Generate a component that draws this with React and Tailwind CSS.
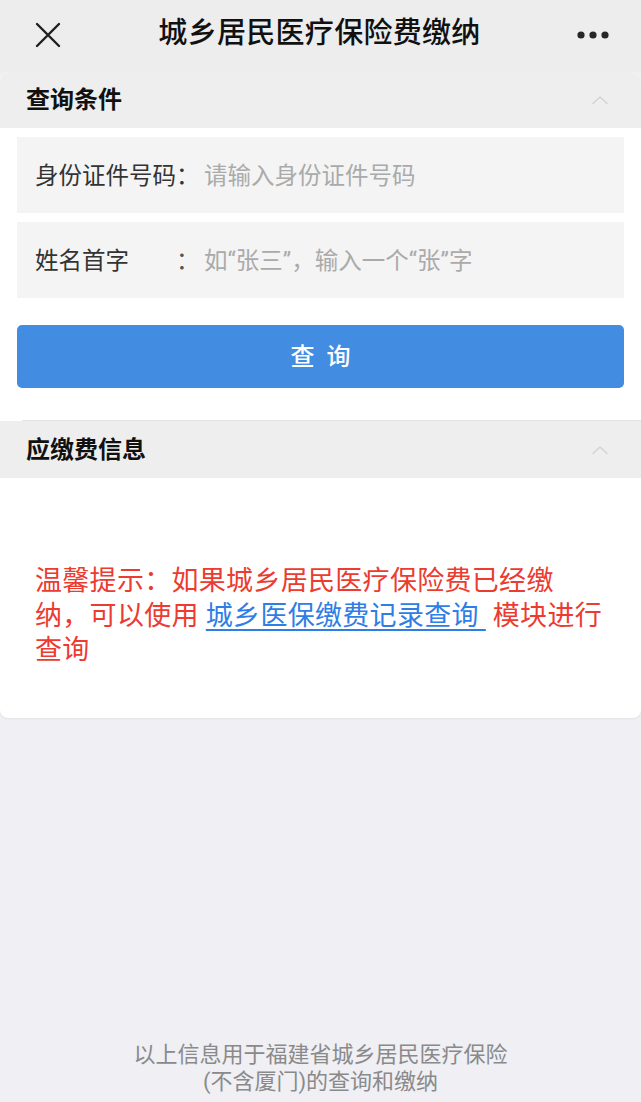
import React from "react";

function Chevron() {
  return (
    <svg width="18" height="10" viewBox="0 0 18 10" fill="none">
      <path d="M2 8.5 L9 2 L16 8.5" stroke="#d4d4d4" strokeWidth="1.6" strokeLinecap="round" strokeLinejoin="round" />
    </svg>
  );
}

export default function App() {
  return (
    <div className="w-[641px] h-[1102px] bg-[#efeff4] flex flex-col font-['Roboto','Noto_Sans_CJK_SC',sans-serif] overflow-hidden">
      <header className="h-[70px] shrink-0 bg-[#ededed] flex items-center justify-between pl-[34px] pr-[32px]">
        <svg width="28" height="28" viewBox="0 0 28 28" fill="none">
          <path d="M3 3 L25 25 M25 3 L3 25" stroke="#1f1f1f" strokeWidth="2.4" strokeLinecap="round" />
        </svg>
        <h1 className="text-[29px] leading-none font-medium text-[#111] tracking-[0.3px] mb-[3px]">城乡居民医疗保险费缴纳</h1>
        <svg width="32" height="8" viewBox="0 0 32 8" fill="#262626">
          <circle cx="4" cy="4" r="3.6" />
          <circle cx="16" cy="4" r="3.6" />
          <circle cx="28" cy="4" r="3.6" />
        </svg>
      </header>

      <div className="bg-[#ededed] h-[2px] shrink-0" />

      <section className="bg-white rounded-t-[10px] shrink-0">
        <div className="h-[56px] bg-[#eeeeee] rounded-t-[10px] flex items-center justify-between pl-[26px] pr-[32px]">
          <span className="text-[24px] font-bold text-[#111]">查询条件</span>
          <Chevron />
        </div>
        <div className="px-[17px] pt-[9px] pb-[32px] flex flex-col">
          <div className="h-[76px] bg-[#f4f4f4] flex items-center pl-[18px] pt-[4px] text-[23.5px]">
            <span className="text-[#333] w-[141px]">身份证件号码</span>
            <span className="text-[#333] w-[28px]">：</span>
            <span className="text-[#aaaaaa]">请输入身份证件号码</span>
          </div>
          <div className="h-[76px] mt-[9px] bg-[#f4f4f4] flex items-center pl-[18px] pt-[4px] text-[23.5px]">
            <span className="text-[#333] w-[141px]">姓名首字</span>
            <span className="text-[#555] w-[28px]">：</span>
            <span className="text-[#aaaaaa]">如“张三”，输入一个“张”字</span>
          </div>
          <button className="mt-[27px] h-[63px] rounded-[5px] bg-[#428ce2] text-white text-[24px] font-medium flex items-center justify-center gap-[12px]">
            <span>查</span>
            <span>询</span>
          </button>
        </div>
      </section>

      <section className="bg-white rounded-b-[8px] shrink-0 shadow-[0_1px_2px_rgba(0,0,0,0.06)]">
        <div className="pl-[22px] bg-white">
          <div className="h-px bg-[#e2e2e2]" />
        </div>
        <div className="h-[57px] bg-[#eeeeee] flex items-center justify-between pl-[26px] pr-[32px]">
          <span className="text-[24px] font-bold text-[#111]">应缴费信息</span>
          <Chevron />
        </div>
        <div className="pl-[35px] pr-[36px] pt-[86px] pb-[50px]">
          <p className="text-[27px] leading-[34.5px] tracking-[0.3px] text-[#ec3b30]">
            温馨提示：如果城乡居民医疗保险费已经缴纳，可以使用{" "}
            <a className="text-[#2f7de6] underline underline-offset-[4px] decoration-[1.5px]">城乡医保缴费记录查询&nbsp;</a>{" "}
            模块进行查询
          </p>
        </div>
      </section>

      <footer className="mt-auto pb-[7px] text-center text-[22px] leading-[27px] text-[#8a8a8a]">
        <div>以上信息用于福建省城乡居民医疗保险</div>
        <div>(不含厦门)的查询和缴纳</div>
      </footer>
    </div>
  );
}
